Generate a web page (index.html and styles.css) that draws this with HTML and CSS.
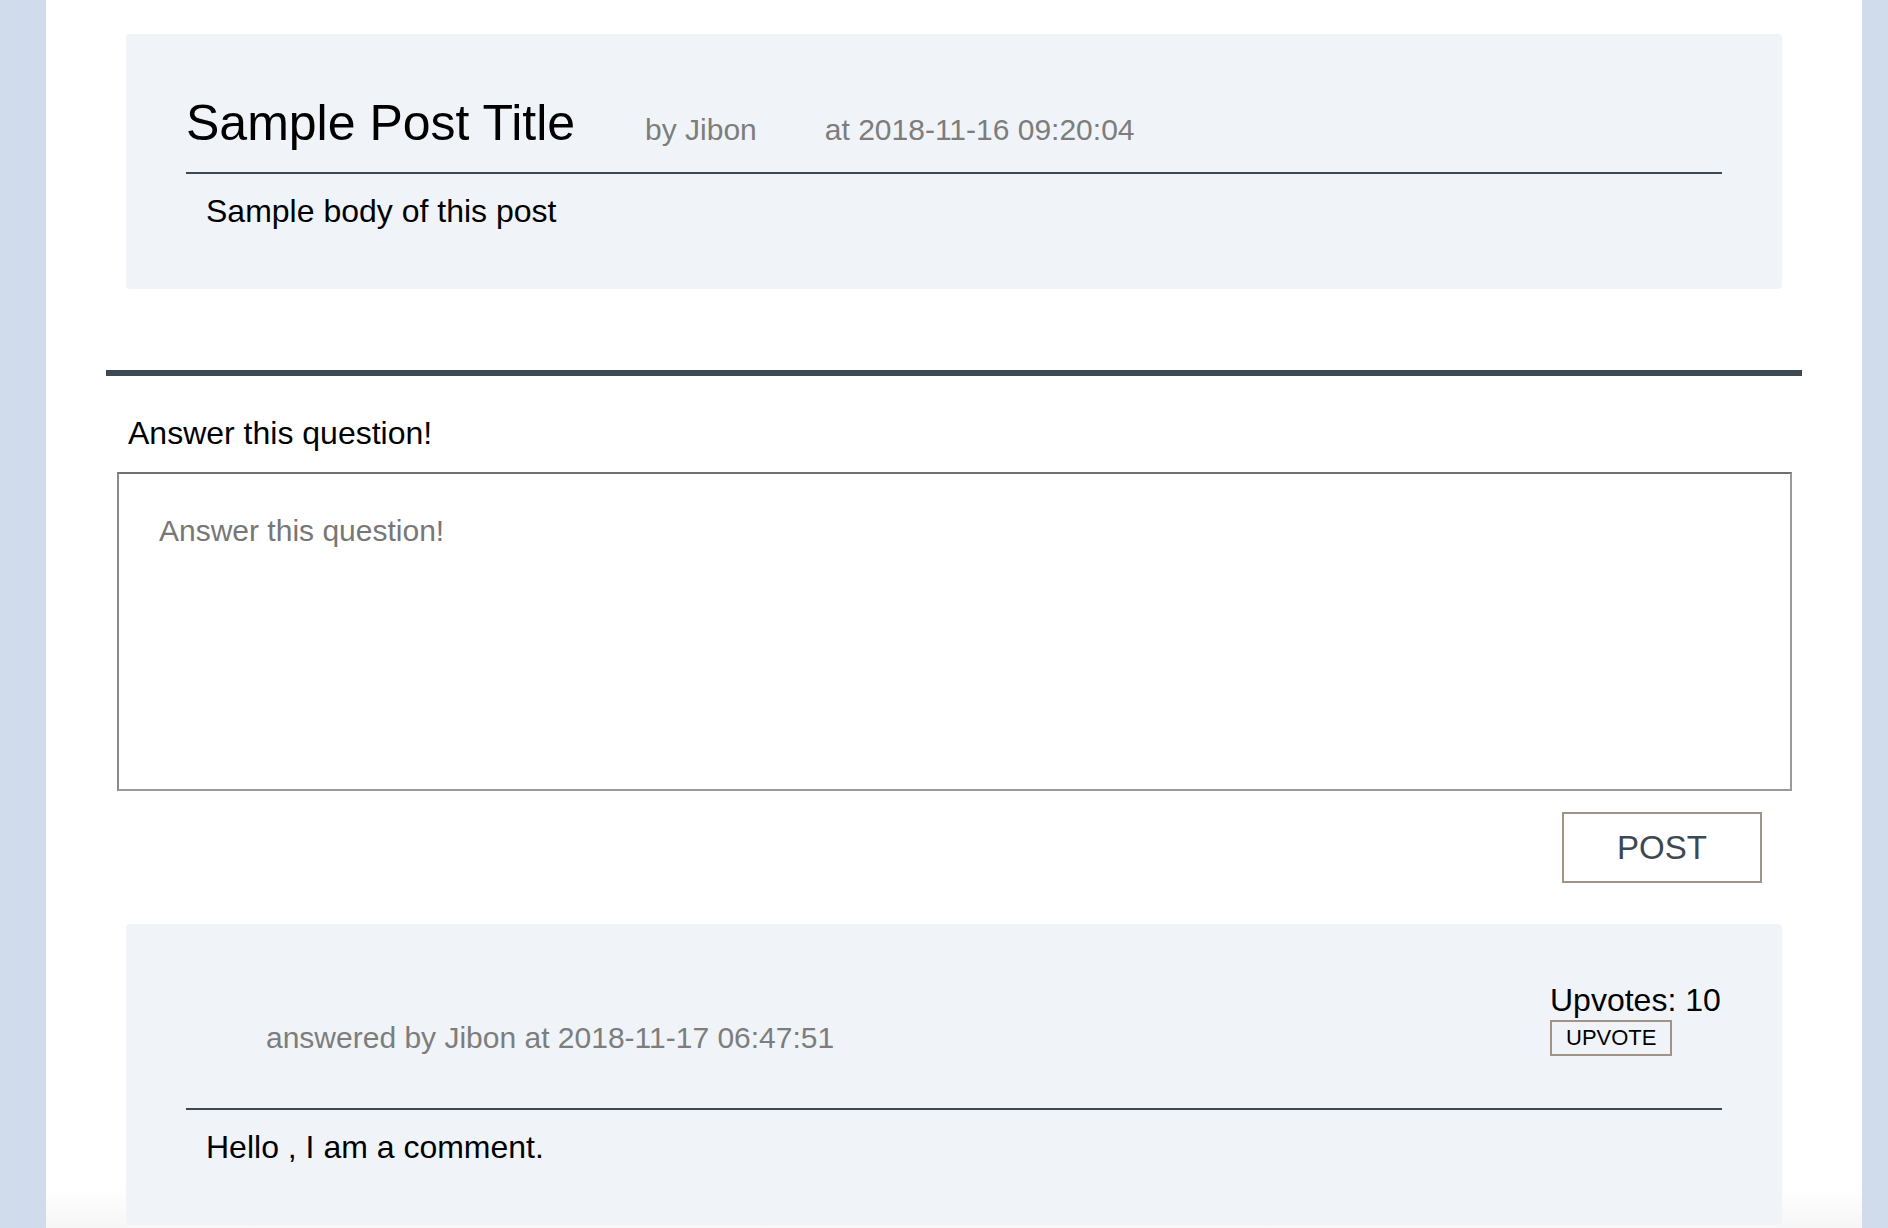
FILE: index.html
```html
<!DOCTYPE html>
<html lang="en">
<head>
<meta charset="utf-8">
<title>Sample Post Title</title>
<link rel="stylesheet" href="styles.css">
</head>
<body>
<main class="page">
  <article class="card post">
    <header class="post-head">
      <h1 class="post-title">Sample Post Title</h1>
      <span class="meta meta-author">by Jibon</span>
      <span class="meta meta-date">at 2018-11-16 09:20:04</span>
    </header>
    <p class="card-body">Sample body of this post</p>
  </article>

  <hr class="divider">

  <form class="answer-form">
    <label class="answer-label" for="answer">Answer this question!</label>
    <textarea id="answer" class="answer-input" placeholder="Answer this question!"></textarea>
    <div class="form-actions">
      <button type="button" class="post-btn">POST</button>
    </div>
  </form>

  <article class="card comment">
    <header class="comment-head">
      <span class="meta comment-meta">answered by Jibon at 2018-11-17 06:47:51</span>
      <div class="votes">
        <div class="votes-count">Upvotes: 10</div>
        <button type="button" class="upvote-btn">UPVOTE</button>
      </div>
    </header>
    <p class="card-body">Hello , I am a comment.</p>
  </article>
</main>
</body>
</html>
```

FILE: styles.css
```css
html, body {
  margin: 0;
  padding: 0;
}

body {
  background: #d0dbeb;
  font-family: "Liberation Sans", Arial, Helvetica, sans-serif;
  color: #000;
}

.page {
  box-sizing: border-box;
  margin-left: 46px;
  width: 1816px;
  min-height: 100vh;
  padding: 34px 0 0;
  background: linear-gradient(to bottom, #ffffff calc(100% - 40px), #f6f6f6 100%);
}

.card {
  margin: 0 80px;
  background: #f0f4f8;
  border-radius: 4px;
  padding: 59px 60px 58px;
}

.post-head {
  display: flex;
  align-items: baseline;
  border-bottom: 2px solid #3d4852;
  padding-bottom: 19px;
}

.post-title {
  margin: 0;
  font-size: 50px;
  line-height: 60px;
  font-weight: normal;
}

.meta {
  color: #7d7d7d;
  font-size: 30px;
  line-height: 36px;
}

.meta-author {
  margin-left: 70px;
}

.meta-date {
  margin-left: 68px;
}

.card-body {
  margin: 17px 0 0;
  padding-left: 20px;
  font-size: 32px;
  line-height: 40px;
}

.divider {
  margin: 81px 60px 0;
  height: 6px;
  border: 0;
  background: #3d4852;
}

.answer-form {
  display: flex;
  flex-direction: column;
}

.answer-label {
  margin: 37px 0 0 82px;
  font-size: 32px;
  line-height: 40px;
}

.answer-input {
  box-sizing: border-box;
  margin: 19px 70px 0 71px;
  height: 319px;
  padding: 40px;
  border: 2px solid #9a9a9a;
  border-top-color: #717171;
  border-left-color: #8a8a8a;
  background: #fff;
  font-family: "Liberation Sans", Arial, Helvetica, sans-serif;
  font-size: 30px;
  line-height: 34px;
  resize: none;
  outline: none;
}

.answer-input::placeholder {
  color: #777;
}

.form-actions {
  display: flex;
  justify-content: flex-end;
  margin: 21px 100px 0 0;
}

.post-btn {
  box-sizing: border-box;
  width: 200px;
  height: 71px;
  border: 2px solid #a09489;
  background: #fff;
  color: #3d4852;
  font-family: "Liberation Sans", Arial, Helvetica, sans-serif;
  font-size: 33px;
  padding: 0;
}

.comment {
  margin-top: 41px;
  padding-top: 58px;
}

.comment-head {
  display: flex;
  justify-content: space-between;
  align-items: flex-end;
  border-bottom: 2px solid #3d4852;
  padding-bottom: 52px;
}

.comment-meta {
  margin-left: 80px;
}

.votes {
  display: flex;
  flex-direction: column;
  align-items: flex-start;
  width: 172px;
}

.votes-count {
  font-size: 32px;
  line-height: 37px;
}

.upvote-btn {
  box-sizing: border-box;
  margin-top: 1px;
  height: 36px;
  padding: 0 14px;
  border: 2px solid #a09489;
  background: transparent;
  color: #000;
  font-family: "Liberation Sans", Arial, Helvetica, sans-serif;
  font-size: 22px;
  line-height: 30px;
}
```
